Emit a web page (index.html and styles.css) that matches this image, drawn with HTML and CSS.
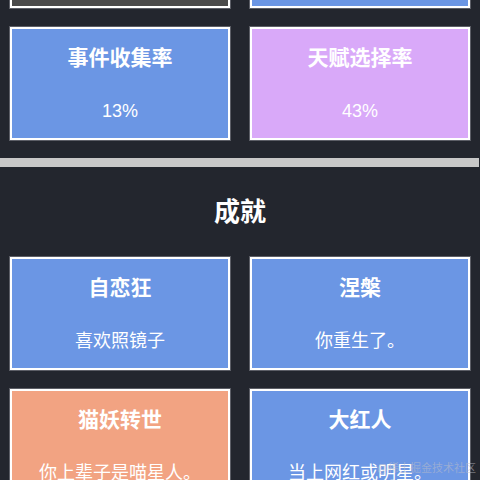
FILE: index.html
```html
<!DOCTYPE html>
<html lang="zh-CN">
<head>
<meta charset="utf-8">
<title>人生重开 - 统计</title>
<link rel="stylesheet" href="styles.css">
</head>
<body>
<div class="page">
  <section class="stats">
    <div class="grid">
      <div class="card gray"></div>
      <div class="card blue"></div>
      <div class="card blue">
        <div class="card-title">事件收集率</div>
        <div class="card-text">13%</div>
      </div>
      <div class="card purple">
        <div class="card-title">天赋选择率</div>
        <div class="card-text">43%</div>
      </div>
    </div>
  </section>
  <div class="divider"></div>
  <section class="achievements">
    <h2 class="section-title">成就</h2>
    <div class="grid">
      <div class="card blue">
        <div class="card-title">自恋狂</div>
        <div class="card-text">喜欢照镜子</div>
      </div>
      <div class="card blue">
        <div class="card-title">涅槃</div>
        <div class="card-text">你重生了。</div>
      </div>
      <div class="card orange">
        <div class="card-title">猫妖转世</div>
        <div class="card-text">你上辈子是喵星人。</div>
      </div>
      <div class="card blue">
        <div class="card-title">大红人</div>
        <div class="card-text">当上网红或明星。</div>
      </div>
    </div>
  </section>
</div>
<div class="watermark">@稀土掘金技术社区</div>
</body>
</html>
```

FILE: styles.css
```css
html, body {
  margin: 0;
  padding: 0;
  background: #23262e;
  overflow: hidden;
  height: 480px;
}

body {
  font-family: "Liberation Sans", "Noto Sans CJK SC", sans-serif;
  color: #fff;
}

.page {
  margin-top: -105px;
}

.grid {
  display: grid;
  grid-template-columns: 1fr 1fr;
  column-gap: 20px;
  row-gap: 19px;
  padding: 0 10px;
}

.card {
  box-sizing: border-box;
  height: 113px;
  border: 2px solid #fff;
  box-shadow: 0 0 0 1px rgba(140, 140, 150, 0.55);
  display: flex;
  flex-direction: column;
  align-items: center;
  text-align: center;
}

.gray { background: #4a4a4a; }
.blue { background: #6b96e4; }
.purple { background: #d9a9f9; }
.orange { background: #f2a382; }

.card-title {
  margin-top: 14px;
  font-size: 21px;
  line-height: 29px;
  font-weight: bold;
}

.card-text {
  margin-top: 27px;
  font-size: 18px;
  line-height: 25px;
}

.divider {
  height: 9px;
  background: #c8c8c8;
  margin-top: 18px;
  margin-right: 1px;
}

.section-title {
  margin: 0;
  height: 90px;
  line-height: 90px;
  text-align: center;
  font-size: 26px;
  font-weight: bold;
}

.watermark {
  position: absolute;
  right: 4px;
  bottom: 5px;
  font-size: 11px;
  line-height: 13px;
  color: rgba(190, 190, 200, 0.55);
}
```
